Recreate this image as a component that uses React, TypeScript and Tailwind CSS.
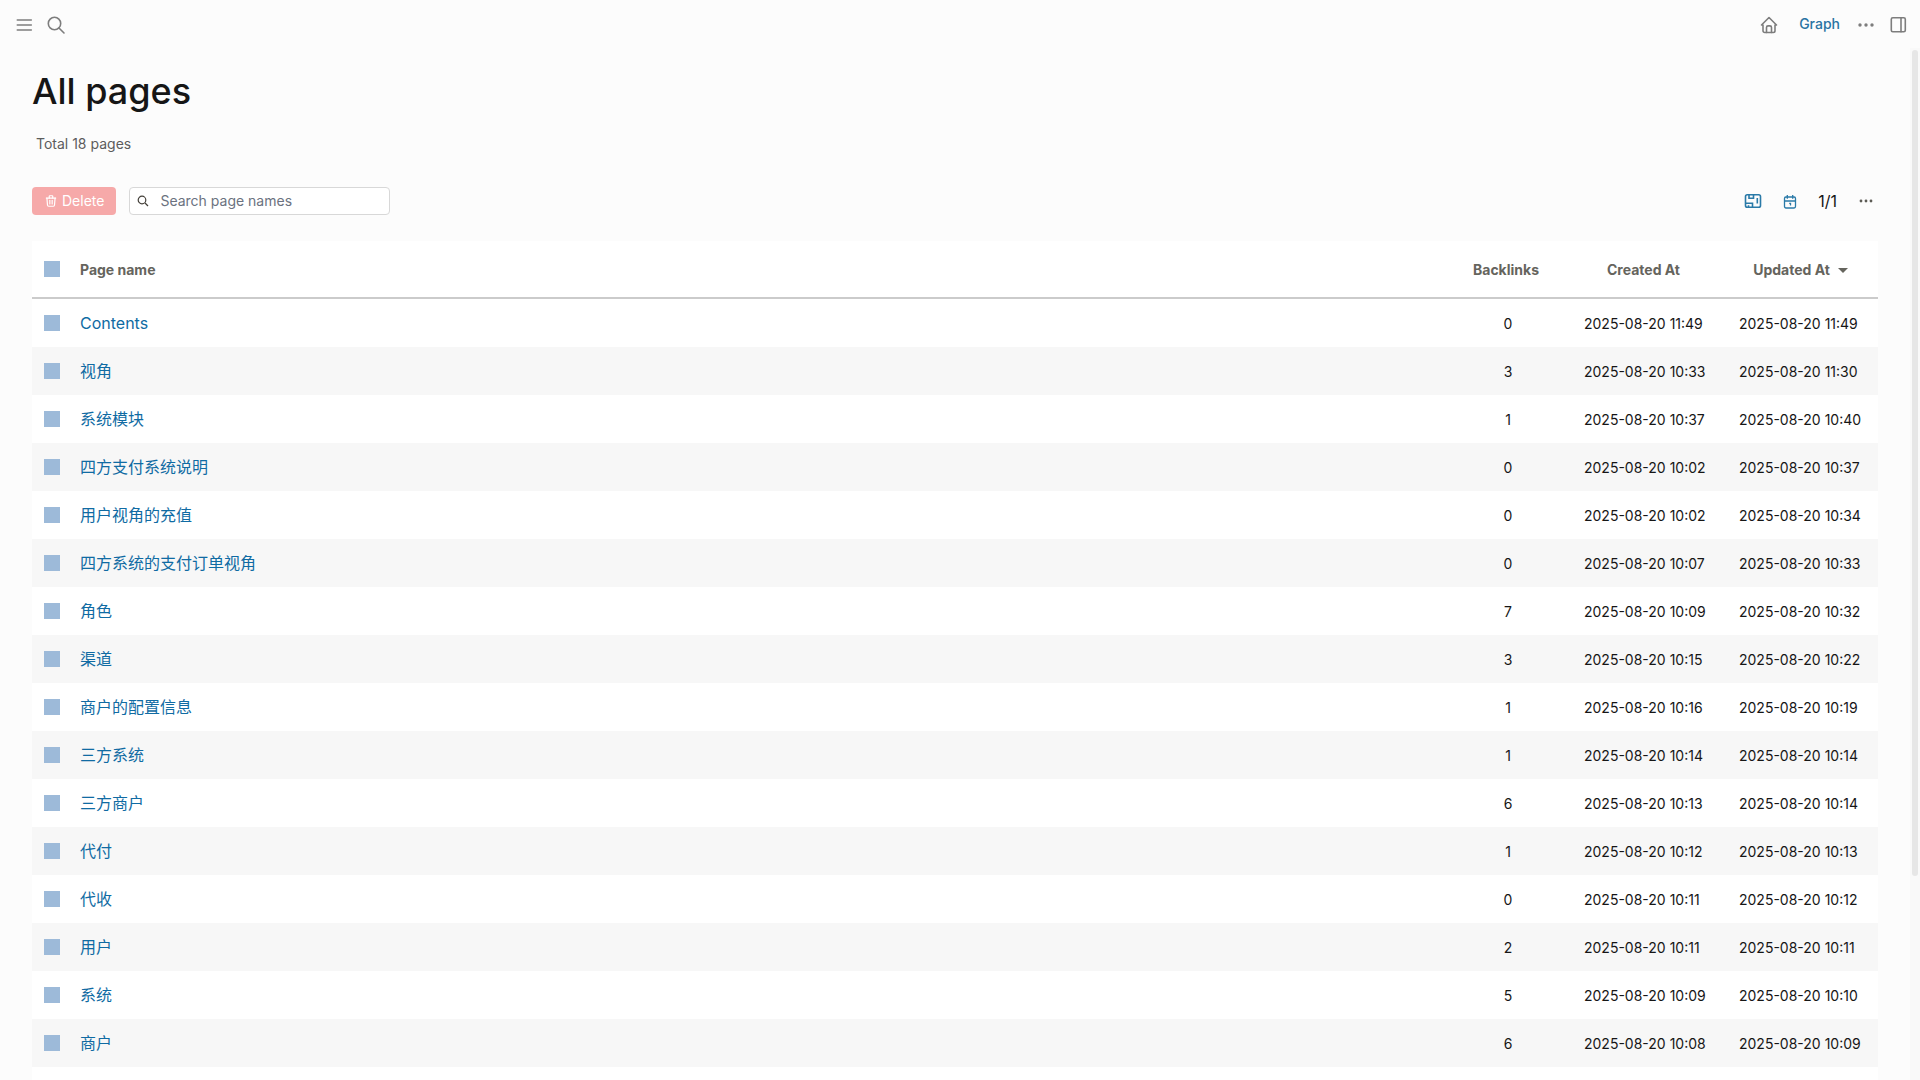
import React, { useState } from 'react';
import { TbTrash } from 'react-icons/tb';

interface PageItem {
  name: string;
  backlinks: number;
  createdAt: string;
  updatedAt: string;
}

const pages: PageItem[] = [
  { name: 'Contents', backlinks: 0, createdAt: '2025-08-20 11:49', updatedAt: '2025-08-20 11:49' },
  { name: '视角', backlinks: 3, createdAt: '2025-08-20 10:33', updatedAt: '2025-08-20 11:30' },
  { name: '系统模块', backlinks: 1, createdAt: '2025-08-20 10:37', updatedAt: '2025-08-20 10:40' },
  { name: '四方支付系统说明', backlinks: 0, createdAt: '2025-08-20 10:02', updatedAt: '2025-08-20 10:37' },
  { name: '用户视角的充值', backlinks: 0, createdAt: '2025-08-20 10:02', updatedAt: '2025-08-20 10:34' },
  { name: '四方系统的支付订单视角', backlinks: 0, createdAt: '2025-08-20 10:07', updatedAt: '2025-08-20 10:33' },
  { name: '角色', backlinks: 7, createdAt: '2025-08-20 10:09', updatedAt: '2025-08-20 10:32' },
  { name: '渠道', backlinks: 3, createdAt: '2025-08-20 10:15', updatedAt: '2025-08-20 10:22' },
  { name: '商户的配置信息', backlinks: 1, createdAt: '2025-08-20 10:16', updatedAt: '2025-08-20 10:19' },
  { name: '三方系统', backlinks: 1, createdAt: '2025-08-20 10:14', updatedAt: '2025-08-20 10:14' },
  { name: '三方商户', backlinks: 6, createdAt: '2025-08-20 10:13', updatedAt: '2025-08-20 10:14' },
  { name: '代付', backlinks: 1, createdAt: '2025-08-20 10:12', updatedAt: '2025-08-20 10:13' },
  { name: '代收', backlinks: 0, createdAt: '2025-08-20 10:11', updatedAt: '2025-08-20 10:12' },
  { name: '用户', backlinks: 2, createdAt: '2025-08-20 10:11', updatedAt: '2025-08-20 10:11' },
  { name: '系统', backlinks: 5, createdAt: '2025-08-20 10:09', updatedAt: '2025-08-20 10:10' },
  { name: '商户', backlinks: 6, createdAt: '2025-08-20 10:08', updatedAt: '2025-08-20 10:09' },
];

interface IconProps {
  children: React.ReactNode;
  size?: number;
  strokeWidth?: number;
}

// Icons are drawn on a 20px grid
const Icon: React.FC<IconProps> = ({ children, size = 20, strokeWidth = 1.6 }) => (
  <svg
    width={size}
    height={size}
    viewBox="0 0 20 20"
    fill="none"
    stroke="currentColor"
    strokeWidth={strokeWidth}
    strokeLinecap="round"
    strokeLinejoin="round"
    aria-hidden="true"
  >
    {children}
  </svg>
);

const DotsIcon: React.FC<{ r: number; gap: number }> = ({ r, gap }) => (
  <Icon>
    <g fill="currentColor" stroke="none">
      <circle cx={10 - gap} cy="10" r={r} />
      <circle cx="10" cy="10" r={r} />
      <circle cx={10 + gap} cy="10" r={r} />
    </g>
  </Icon>
);

const Header: React.FC = () => (
  <header className="flex h-12 shrink-0 items-center justify-between pt-0.5 pr-3 pl-[14px] text-[#7d7d7d]">
    <div className="flex items-center gap-3">
      <button type="button" aria-label="Toggle left sidebar">
        <Icon>
          <path d="M3.3 5h14M3.3 10h14M3.3 15h14" />
        </Icon>
      </button>
      <button type="button" aria-label="Search">
        <Icon>
          <circle cx="8.5" cy="8.5" r="6.2" />
          <path d="M13 13l5 5" />
        </Icon>
      </button>
    </div>
    <div className="flex items-center">
      <a href="#" aria-label="Home" className="mr-5">
        <Icon>
          <path d="M4 10H2.5L10 2.5L17.5 10H16M4 10v5.8a1.7 1.7 0 0 0 1.7 1.7h8.6a1.7 1.7 0 0 0 1.7-1.7V10" />
          <path d="M7.5 17.5v-5a1.6 1.6 0 0 1 1.6-1.6h1.8a1.6 1.6 0 0 1 1.6 1.6v5" />
        </Icon>
      </a>
      <a href="#" className="mr-4 pb-0.5 text-sm font-medium text-[#2a74a3]">
        Graph
      </a>
      <button type="button" aria-label="More" className="mr-3">
        <DotsIcon r={1.7} gap={6} />
      </button>
      <button type="button" aria-label="Toggle right sidebar">
        <Icon>
          <rect x="3.3" y="2.8" width="14" height="14" rx="1.5" />
          <path d="M13 2.8v14" />
        </Icon>
      </button>
    </div>
  </header>
);

const Toolbar: React.FC = () => (
  <div className="mt-[33px] flex items-center justify-between">
    <div className="flex items-center gap-[13px]">
      <button
        type="button"
        disabled
        className="flex h-7 items-center gap-1 rounded bg-[#f6a9a9] px-3 text-sm text-white"
      >
        <TbTrash size={14} />
        Delete
      </button>
      <label className="flex h-7 w-[261px] items-center gap-[11px] rounded border border-[#d8d8d8] bg-white pl-[7px] text-[#433f38]">
        <svg width="12" height="12" viewBox="0 0 12 12" fill="none" stroke="currentColor" strokeWidth="1.2" aria-hidden="true">
          <circle cx="5" cy="5" r="3.8" />
          <path d="M8 8l3 3" />
        </svg>
        <input
          type="text"
          aria-label="Search page names"
          placeholder="Search page names"
          className="min-w-0 flex-1 bg-transparent text-sm outline-none placeholder:text-[#6b7280]"
        />
      </label>
    </div>
    <div className="flex items-center text-[#2a7aa8]">
      <button type="button" aria-label="Orphaned pages" className="mr-5">
        <svg width="18" height="16" viewBox="0 0 18 16" fill="none" stroke="currentColor" strokeWidth="1.6" aria-hidden="true">
          <rect x="1.5" y="1.8" width="15" height="12.5" rx="1.8" />
          <path d="M5 1.8v3.4h4.5V1.8M13.3 5v5.5M1.5 10.2h7v4.1M4.5 14v-1.7" />
        </svg>
      </button>
      <button type="button" aria-label="Journals" className="mr-5">
        <svg width="16" height="16" viewBox="0 0 16 16" fill="none" stroke="currentColor" strokeWidth="1.3" aria-hidden="true">
          <rect x="2.5" y="4" width="11" height="11" rx="1.4" />
          <path d="M2.5 8h11M5.3 2v3.7M10.7 2v3.7M7.2 10.4h1.3v2" />
        </svg>
      </button>
      <span className="mr-[19px] text-base text-[#161616]">1/1</span>
      <button type="button" aria-label="Table options" className="mr-0.5 text-[#5c5b55]">
        <DotsIcon r={1.4} gap={5} />
      </button>
    </div>
  </div>
);

const checkboxClass = 'block size-4 appearance-none bg-[#9dbad9] checked:bg-[#106ba3]';

const App: React.FC = () => {
  const [selected, setSelected] = useState<string[]>([]);

  const toggle = (name: string) => {
    setSelected(prev => (prev.includes(name) ? prev.filter(n => n !== name) : [...prev, name]));
  };

  const allSelected = selected.length === pages.length;

  return (
    <div className="flex h-screen flex-col overflow-hidden bg-[#fcfcfc] font-[Inter,'Noto_Sans_CJK_SC',sans-serif] text-[#161616]">
      <Header />

      <div className="flex min-h-0 flex-1">
        <main className="flex min-w-0 flex-1 flex-col overflow-hidden pr-8 pl-8">
          <h1 className="mt-[23px] text-4xl leading-10 font-medium">All pages</h1>
          <p className="mt-[23px] pl-1 text-sm text-[#5c5c5c]">Total 18 pages</p>

          <Toolbar />

          {/* Pages table */}
          <div className="mt-[26px] flex-1 bg-white">
            <table className="w-full table-fixed border-separate border-spacing-0 text-sm">
              <thead className="text-[#65645d]">
                <tr className="h-[58px] [&>th]:border-b-2 [&>th]:border-[#cbcbcb]">
                  <th className="w-12 pl-3">
                    <input
                      type="checkbox"
                      aria-label="Select all pages"
                      className={checkboxClass}
                      checked={allSelected}
                      onChange={() => setSelected(allSelected ? [] : pages.map(p => p.name))}
                    />
                  </th>
                  <th className="pt-0.5 text-left font-bold">
                    <button type="button">Page name</button>
                  </th>
                  <th className="w-32 pt-0.5 pr-1 font-bold">
                    <button type="button">Backlinks</button>
                  </th>
                  <th className="w-[155px] pt-0.5 pr-3 font-bold">
                    <button type="button">Created At</button>
                  </th>
                  <th className="w-[151px] pt-0.5 pr-1 font-bold">
                    <button type="button" className="inline-flex items-center gap-2">
                      Updated At
                      <svg width="10" height="5" viewBox="0 0 10 5" fill="currentColor" aria-hidden="true">
                        <path d="M0 0h10L5 5z" />
                      </svg>
                    </button>
                  </th>
                </tr>
              </thead>
              <tbody>
                {pages.map(page => (
                  <tr key={page.name} className="h-12 even:bg-[#f7f7f7]">
                    <td className="pl-3">
                      <input
                        type="checkbox"
                        aria-label={page.name}
                        className={checkboxClass}
                        checked={selected.includes(page.name)}
                        onChange={() => toggle(page.name)}
                      />
                    </td>
                    <td>
                      <a href="#" className="text-base text-[#106ba3]">
                        {page.name}
                      </a>
                    </td>
                    <td className="pt-0.5 text-center">{page.backlinks}</td>
                    <td className="pt-0.5 pl-3 whitespace-nowrap">{page.createdAt}</td>
                    <td className="pt-0.5 pl-3 whitespace-nowrap">{page.updatedAt}</td>
                  </tr>
                ))}
              </tbody>
            </table>
          </div>
        </main>

        {/* Scrollbar */}
        <div className="w-[10px] shrink-0 bg-[#f9f9f9] p-0.5">
          <div className="h-[calc(80%+4px)] w-1.5 rounded-full bg-[#e6e6e6]" />
        </div>
      </div>
    </div>
  );
};

export default App;
